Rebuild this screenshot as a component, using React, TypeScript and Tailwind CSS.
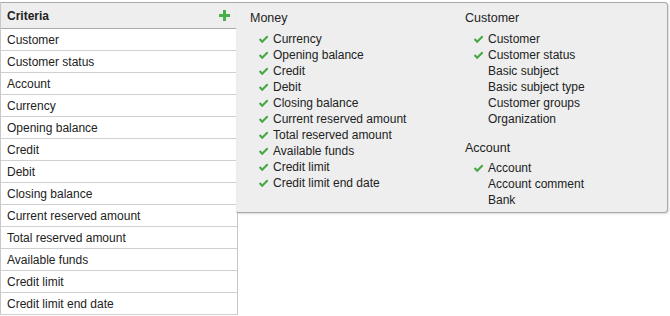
import React from "react";

const rows = [
  "Customer",
  "Customer status",
  "Account",
  "Currency",
  "Opening balance",
  "Credit",
  "Debit",
  "Closing balance",
  "Current reserved amount",
  "Total reserved amount",
  "Available funds",
  "Credit limit",
  "Credit limit end date",
];

const money: [string, boolean][] = [
  ["Currency", true],
  ["Opening balance", true],
  ["Credit", true],
  ["Debit", true],
  ["Closing balance", true],
  ["Current reserved amount", true],
  ["Total reserved amount", true],
  ["Available funds", true],
  ["Credit limit", true],
  ["Credit limit end date", true],
];

const customer: [string, boolean][] = [
  ["Customer", true],
  ["Customer status", true],
  ["Basic subject", false],
  ["Basic subject type", false],
  ["Customer groups", false],
  ["Organization", false],
];

const account: [string, boolean][] = [
  ["Account", true],
  ["Account comment", false],
  ["Bank", false],
];

function Check() {
  return (
    <svg width="11" height="9" viewBox="0 0 11 9" className="block">
      <path d="M0.8 4.8 L2.3 3.3 L4.2 5.2 L8.9 0.6 L10.4 2.1 L4.2 8.2 Z" fill="#45a843" />
    </svg>
  );
}

function Item({ label, checked }: { label: string; checked: boolean }) {
  return (
    <div className="flex items-center h-[16px] pl-[8px]">
      <div className="w-[15px] flex items-center">{checked ? <Check /> : null}</div>
      <span>{label}</span>
    </div>
  );
}

export default function App() {
  return (
    <div
      className="relative w-[670px] h-[316px] bg-white text-[12px] text-[#222]"
      style={{ fontFamily: '"Liberation Sans", Arial, sans-serif' }}
    >
      <div className="pt-[2px]">
        <div className="w-[238px] border-x border-[#c8c8c8]">
          <div className="h-[27px] bg-[#eeeeee] border-t border-b border-[#aaaaaa] flex items-center justify-between pl-[6px] pr-[7px]">
            <span className="font-bold">Criteria</span>
            <svg width="11" height="11" viewBox="0 0 11 11" className="block">
              <rect x="4" y="0" width="3" height="11" fill="#48b04a" />
              <rect x="0" y="4" width="11" height="3" fill="#48b04a" />
            </svg>
          </div>
          {rows.map((r) => (
            <div key={r} className="h-[22px] border-b border-[#d0d0d0] flex items-center pl-[6px]">
              {r}
            </div>
          ))}
        </div>
      </div>

      <div className="absolute left-[236px] top-[2px] w-[432px] h-[211px] bg-[#eeeeee] border border-l-0 border-[#a8a8a8] rounded-r-[4px] rounded-bl-[2px] shadow-[1px_1px_2px_rgba(0,0,0,0.15)] flex pl-[14px] pt-[7px] text-[12px]">
        <div className="w-[215px]">
          <div className="h-[16px] flex items-center mb-[5px] text-[12.5px]">Money</div>
          {money.map(([l, c]) => (
            <Item key={l} label={l} checked={c} />
          ))}
        </div>
        <div>
          <div className="h-[16px] flex items-center mb-[5px] text-[12.5px]">Customer</div>
          {customer.map(([l, c]) => (
            <Item key={l} label={l} checked={c} />
          ))}
          <div className="h-[16px] flex items-center mt-[13px] mb-[4px] text-[12.5px]">Account</div>
          {account.map(([l, c]) => (
            <Item key={l} label={l} checked={c} />
          ))}
        </div>
      </div>
    </div>
  );
}
